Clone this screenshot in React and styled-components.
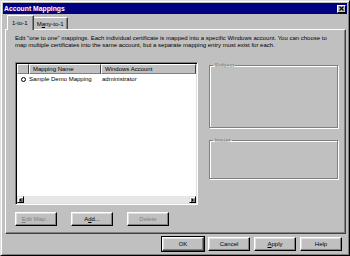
import React from "react";
import styled, { createGlobalStyle, css } from "styled-components";

const GlobalStyle = createGlobalStyle`
  html, body { margin: 0; padding: 0; background: #c0c0c0; }
  body { font-family: "Liberation Sans", Arial, sans-serif; font-size: 6px; color: #000; }
  * { box-sizing: border-box; }
`;

const Window = styled.div`
  width: 350px;
  height: 256px;
  background: #c0c0c0;
  border: 1px solid;
  border-color: #dfdfdf #000 #000 #dfdfdf;
  box-shadow: inset 1px 1px #fff, inset -1px -1px #808080;
  padding: 2px;
  display: flex;
  flex-direction: column;
`;

const TitleBar = styled.div`
  height: 11px;
  background: #000080;
  display: flex;
  align-items: center;
  justify-content: space-between;
  padding: 0 1px 0 1px;
`;

const Title = styled.span`
  color: #fff;
  font-weight: bold;
  font-size: 6.8px;
`;

const CloseBtn = styled.div`
  width: 9px;
  height: 8px;
  background: #c0c0c0;
  border: 1px solid;
  border-color: #fff #000 #000 #fff;
  display: flex;
  align-items: center;
  justify-content: center;
`;

const Body = styled.div`
  flex: 1;
  display: flex;
  flex-direction: column;
  padding: 1px 3px 0 2px;
`;

const TabRow = styled.div`
  display: flex;
  align-items: flex-end;
  padding-left: 2px;
  height: 14px;
  position: relative;
  z-index: 1;
`;

const Tab = styled.div`
  background: #c0c0c0;
  border: 1px solid;
  border-color: #fff #404040 transparent #fff;
  border-bottom: none;
  border-radius: 1px 1px 0 0;
  box-shadow: inset -1px 0 #808080;
  display: flex;
  align-items: center;
  justify-content: center;
  white-space: nowrap;
  ${(p) =>
    p.$active
      ? css`
          height: 15px;
          margin-bottom: -1px;
          padding: 0 5px 1px 4px;
        `
      : css`
          height: 12px;
          padding: 0 3px 0 3px;
          border-left: none;
        `}
`;

const Panel = styled.div`
  width: 341px;
  height: 205px;
  border: 1px solid;
  border-color: #fff #404040 #404040 #fff;
  box-shadow: inset -1px -1px #808080;
  padding: 3px 7px 0 9px;
  display: flex;
  flex-direction: column;
`;

const Desc = styled.p`
  margin: 0;
  line-height: 7px;
  height: 29px;
  padding-top: 2px;
  white-space: nowrap;
`;

const ContentRow = styled.div`
  display: flex;
  gap: 11px;
  height: 143px;
`;

const ListView = styled.div`
  width: 184px;
  height: 143px;
  background: #fff;
  border: 1px solid;
  border-color: #808080 #fff #fff #808080;
  box-shadow: inset 1px 1px #000, inset -1px -1px #dfdfdf;
  padding: 1px;
  display: flex;
  flex-direction: column;
`;

const HeaderRow = styled.div`
  display: flex;
  height: 10px;
`;

const HeaderCell = styled.div`
  width: ${(p) => p.$w};
  flex: ${(p) => (p.$grow ? 1 : "none")};
  background: #c0c0c0;
  border: 1px solid;
  border-color: #fff #404040 #808080 #fff;
  padding-left: 3px;
  display: flex;
  align-items: center;
  white-space: nowrap;
  overflow: hidden;
`;

const Rows = styled.div`
  flex: 1;
  padding-top: 1px;
`;

const Row = styled.div`
  display: flex;
  align-items: center;
  height: 8px;
`;

const IconCell = styled.div`
  width: 12px;
  display: flex;
  justify-content: center;
  padding-left: 1px;
`;

const Radio = styled.span`
  width: 5px;
  height: 5px;
  border-radius: 50%;
  border: 1.4px solid #000;
  background: #fff;
`;

const Cell = styled.div`
  width: ${(p) => p.$w};
  padding-left: ${(p) => p.$pl || "0px"};
  white-space: nowrap;
`;

const HScroll = styled.div`
  height: 7px;
  display: flex;
  background: #e6e6e6;
`;

const ScrollBtn = styled.div`
  width: 7px;
  height: 7px;
  background: #c0c0c0;
  border: 1px solid;
  border-color: #dfdfdf #000 #000 #dfdfdf;
  box-shadow: inset 1px 1px #fff, inset -1px -1px #808080;
  display: flex;
  align-items: center;
  justify-content: center;
  margin-left: ${(p) => (p.$right ? "auto" : "0")};
`;

const RightCol = styled.div`
  width: 129px;
  display: flex;
  flex-direction: column;
  gap: 9px;
`;

const Group = styled.fieldset`
  margin: 0;
  height: ${(p) => p.$h};
  border: 1px solid #808080;
  box-shadow: inset 1px 1px #fff, 1px 1px #fff;
  padding: 0;
  border-radius: 0;
`;

const Legend = styled.legend`
  margin-left: 3px;
  padding: 0 1px;
  color: #808080;
  line-height: 6px;
`;

const PanelButtons = styled.div`
  display: flex;
  gap: 14px;
  margin-top: 7px;
`;

const Button = styled.div`
  width: 42px;
  height: 14px;
  background: #c0c0c0;
  border: 1px solid;
  border-color: #fff #000 #000 #fff;
  box-shadow: inset -1px -1px #808080, inset 1px 1px #dfdfdf;
  display: flex;
  align-items: center;
  justify-content: center;
  white-space: nowrap;
  color: ${(p) => (p.$disabled ? "#808080" : "#000")};
  ${(p) =>
    p.$default &&
    css`
      outline: 1px solid #000;
      border-color: #fff #404040 #404040 #fff;
    `}
  u {
    text-decoration-thickness: 0.5px;
    text-underline-offset: 1px;
  }
`;

const Footer = styled.div`
  display: flex;
  justify-content: flex-end;
  gap: 4px;
  padding: 3px 2px 0 0;
`;

const Underlined = styled.u`
  text-decoration-thickness: 0.5px;
  text-underline-offset: 1px;
`;

export default function App() {
  return (
    <>
      <GlobalStyle />
      <Window>
        <TitleBar>
          <Title>Account Mappings</Title>
          <CloseBtn>
            <svg width="5" height="5" viewBox="0 0 5 5">
              <path d="M0.5 0.5 L4.5 4.5 M4.5 0.5 L0.5 4.5" stroke="#000" strokeWidth="1.2" />
            </svg>
          </CloseBtn>
        </TitleBar>
        <Body>
          <TabRow>
            <Tab $active>1-to-1</Tab>
            <Tab>
              <span>
                M<Underlined>a</Underlined>ny-to-1
              </span>
            </Tab>
          </TabRow>
          <Panel>
            <Desc>
              Edit "one to one" mappings. Each individual certificate is mapped into a specific Windows account. You can choose to
              <br />
              map multiple certificates into the same account, but a separate mapping entry must exist for each.
            </Desc>
            <ContentRow>
              <ListView>
                <HeaderRow>
                  <HeaderCell $w="12px" />
                  <HeaderCell $w="72px">Mapping Name</HeaderCell>
                  <HeaderCell $grow>Windows Account</HeaderCell>
                </HeaderRow>
                <Rows>
                  <Row>
                    <IconCell>
                      <Radio />
                    </IconCell>
                    <Cell $w="72px">Sample Demo Mapping</Cell>
                    <Cell $pl="1px">administrator</Cell>
                  </Row>
                </Rows>
                <HScroll>
                  <ScrollBtn>
                    <svg width="3" height="4" viewBox="0 0 3 4">
                      <path d="M0 2 L2.5 0 V4 Z" fill="#000" />
                    </svg>
                  </ScrollBtn>
                  <ScrollBtn $right>
                    <svg width="3" height="4" viewBox="0 0 3 4">
                      <path d="M3 2 L0.5 0 V4 Z" fill="#000" />
                    </svg>
                  </ScrollBtn>
                </HScroll>
              </ListView>
              <RightCol>
                <Group $h="66px">
                  <Legend>Subject</Legend>
                </Group>
                <Group $h="42px">
                  <Legend>Issuer</Legend>
                </Group>
              </RightCol>
            </ContentRow>
            <PanelButtons>
              <Button $disabled>
                <span>
                  <u>E</u>dit Map...
                </span>
              </Button>
              <Button>
                <span>
                  A<u>d</u>d...
                </span>
              </Button>
              <Button $disabled>Delete</Button>
            </PanelButtons>
          </Panel>
          <Footer>
            <Button $default>OK</Button>
            <Button>Cancel</Button>
            <Button>
              <span>
                <u>A</u>pply
              </span>
            </Button>
            <Button>Help</Button>
          </Footer>
        </Body>
      </Window>
    </>
  );
}
